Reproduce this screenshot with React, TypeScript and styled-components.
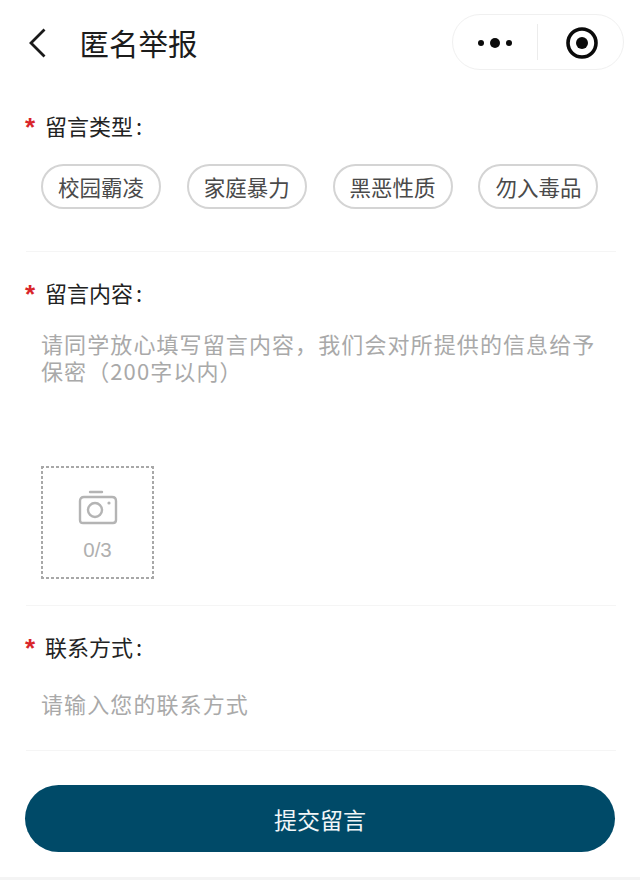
import * as React from "react";
import styled, { createGlobalStyle } from "styled-components";

const GlobalStyle = createGlobalStyle`
  html, body {
    margin: 0;
    padding: 0;
    background: #fff;
  }
  * {
    box-sizing: border-box;
  }
`;

const Page = styled.div`
  width: 640px;
  height: 880px;
  overflow: hidden;
  background: #fff;
  display: flex;
  flex-direction: column;
  font-family: "Noto Sans CJK SC", "Liberation Sans", sans-serif;
`;

const Header = styled.header`
  display: flex;
  align-items: center;
  height: 88px;
  padding: 0 16px 4px 28px;
  flex-shrink: 0;
`;

const BackBtn = styled.svg`
  width: 20px;
  height: 30px;
  margin: 2px 31.5px 0 0;
  flex-shrink: 0;
`;

const Title = styled.h1`
  flex: 1;
  margin: 0;
  font-size: 29.5px;
  line-height: 40px;
  font-weight: 400;
  color: #1c1c1c;
`;

const Capsule = styled.div`
  display: flex;
  align-items: center;
  width: 172px;
  height: 56px;
  border: 1px solid #f0f0f0;
  border-radius: 28px;
  background: #fff;
`;

const CapsuleCell = styled.div`
  flex: 1;
  height: 100%;
  padding-top: 2px;
  display: flex;
  align-items: center;
  justify-content: center;
`;

const MoreIcon = styled.svg`
  width: 36px;
  height: 12px;
  margin-left: -1px;
`;

const TargetIcon = styled.svg`
  width: 34px;
  height: 34px;
  margin-left: 2px;
`;

const CapsuleLine = styled.div`
  width: 1px;
  height: 36px;
  margin-left: -1px;
  background: #ececec;
`;

const Form = styled.main`
  flex: 1;
  display: flex;
  flex-direction: column;
  padding: 0 24px 0 25px;
`;

const Section = styled.section<{ $height: number }>`
  height: ${(p) => p.$height}px;
  flex-shrink: 0;
  border-bottom: 1px solid #f5f5f5;
  margin-left: 1px;
  display: flex;
  flex-direction: column;
`;

const Label = styled.div<{ $top: number }>`
  display: flex;
  align-items: center;
  height: 30px;
  margin-top: ${(p) => p.$top}px;
  margin-left: -1px;
  font-size: 22px;
  color: #222;
`;

const Star = styled.span`
  width: 20px;
  padding-top: 4px;
  font-family: "Liberation Sans", sans-serif;
  font-size: 26px;
  font-weight: 700;
  line-height: 30px;
  color: #d9252a;
`;

const Colon = styled.span`
  margin-left: 3px;
`;

const Chips = styled.div`
  display: flex;
  gap: 25.8px;
  margin: 24px 0 0 15px;
`;

const Chip = styled.div`
  width: 120px;
  height: 45px;
  display: flex;
  align-items: center;
  justify-content: center;
  border: 2px solid #d4d4d4;
  border-radius: 23px;
  font-size: 21.5px;
  color: #4a4a4a;
`;

const Hint = styled.div<{ $top: number }>`
  margin: ${(p) => p.$top}px 0 0 15px;
  width: 560px;
  font-size: 22px;
  letter-spacing: 1.1px;
  line-height: 27px;
  color: #a9a9a9;
`;

const Upload = styled.div`
  width: 113px;
  height: 113px;
  margin: 82px 0 0 15px;
  background:
    repeating-linear-gradient(90deg, #a8a8a8 0 3px, transparent 3px 5px) top / 100% 2px no-repeat,
    repeating-linear-gradient(90deg, #a8a8a8 0 3px, transparent 3px 5px) bottom / 100% 2px no-repeat,
    repeating-linear-gradient(0deg, #a8a8a8 0 3px, transparent 3px 5px) left / 2px 100% no-repeat,
    repeating-linear-gradient(0deg, #a8a8a8 0 3px, transparent 3px 5px) right / 2px 100% no-repeat;
  display: flex;
  flex-direction: column;
  align-items: center;
`;

const CameraIcon = styled.svg`
  width: 40px;
  height: 36px;
  margin-top: 24px;
`;

const Count = styled.div`
  margin-top: 12px;
  font-family: "Liberation Sans", sans-serif;
  font-size: 20.5px;
  line-height: 24px;
  color: #b0b0b0;
`;

const Submit = styled.button`
  display: block;
  width: 590px;
  height: 67px;
  margin-top: 34px;
  flex-shrink: 0;
  border: 0;
  border-radius: 34px;
  background: #004a68;
  color: #f2f6f8;
  font-family: inherit;
  font-size: 23px;
`;

const BottomBand = styled.div`
  height: 3px;
  flex-shrink: 0;
  background: #f4f4f4;
`;

const CHIPS = ["校园霸凌", "家庭暴力", "黑恶性质", "勿入毒品"];

const App = (): React.JSX.Element => (
  <Page>
    <GlobalStyle />
    <Header>
      <BackBtn viewBox="0 0 20 30" fill="none">
        <path d="M16.5 1.5 L3 15 L16.5 28.5" stroke="#1a1a1a" strokeWidth="2.8" />
      </BackBtn>
      <Title>匿名举报</Title>
      <Capsule>
        <CapsuleCell>
          <MoreIcon viewBox="0 0 36 12">
            <circle cx="4" cy="6" r="3" fill="#0a0a0a" />
            <circle cx="18" cy="6" r="5" fill="#0a0a0a" />
            <circle cx="32" cy="6" r="3" fill="#0a0a0a" />
          </MoreIcon>
        </CapsuleCell>
        <CapsuleLine />
        <CapsuleCell>
          <TargetIcon viewBox="0 0 34 34">
            <circle cx="17" cy="17" r="14" fill="none" stroke="#0a0a0a" strokeWidth="3.6" />
            <circle cx="17" cy="17" r="6" fill="#0a0a0a" />
          </TargetIcon>
        </CapsuleCell>
      </Capsule>
    </Header>
    <Form>
      <Section $height={164}>
        <Label $top={22}>
          <Star>*</Star>留言类型<Colon>:</Colon>
        </Label>
        <Chips>
          {CHIPS.map((c) => (
            <Chip key={c}>{c}</Chip>
          ))}
        </Chips>
      </Section>
      <Section $height={354}>
        <Label $top={25}>
          <Star>*</Star>留言内容<Colon>:</Colon>
        </Label>
        <Hint $top={23}>请同学放心填写留言内容，我们会对所提供的信息给予保密（200字以内）</Hint>
        <Upload>
          <CameraIcon viewBox="0 0 40 36" fill="none" stroke="#b4b4b4" strokeWidth="2.4">
            <path d="M12 2 H24" strokeLinecap="round" />
            <path d="M9 7 H34 Q38 7 38 11 V30 Q38 33 35 33 H5 Q2 33 2 30 V11 Q2 7 6 7 H9" />
            <circle cx="17" cy="20" r="7" />
            <circle cx="31" cy="13" r="1.6" fill="#b4b4b4" stroke="none" />
          </CameraIcon>
          <Count>0/3</Count>
        </Upload>
      </Section>
      <Section $height={145}>
        <Label $top={25}>
          <Star>*</Star>联系方式<Colon>:</Colon>
        </Label>
        <Hint $top={29}>请输入您的联系方式</Hint>
      </Section>
      <Submit>提交留言</Submit>
    </Form>
    <BottomBand />
  </Page>
);

export default App;
